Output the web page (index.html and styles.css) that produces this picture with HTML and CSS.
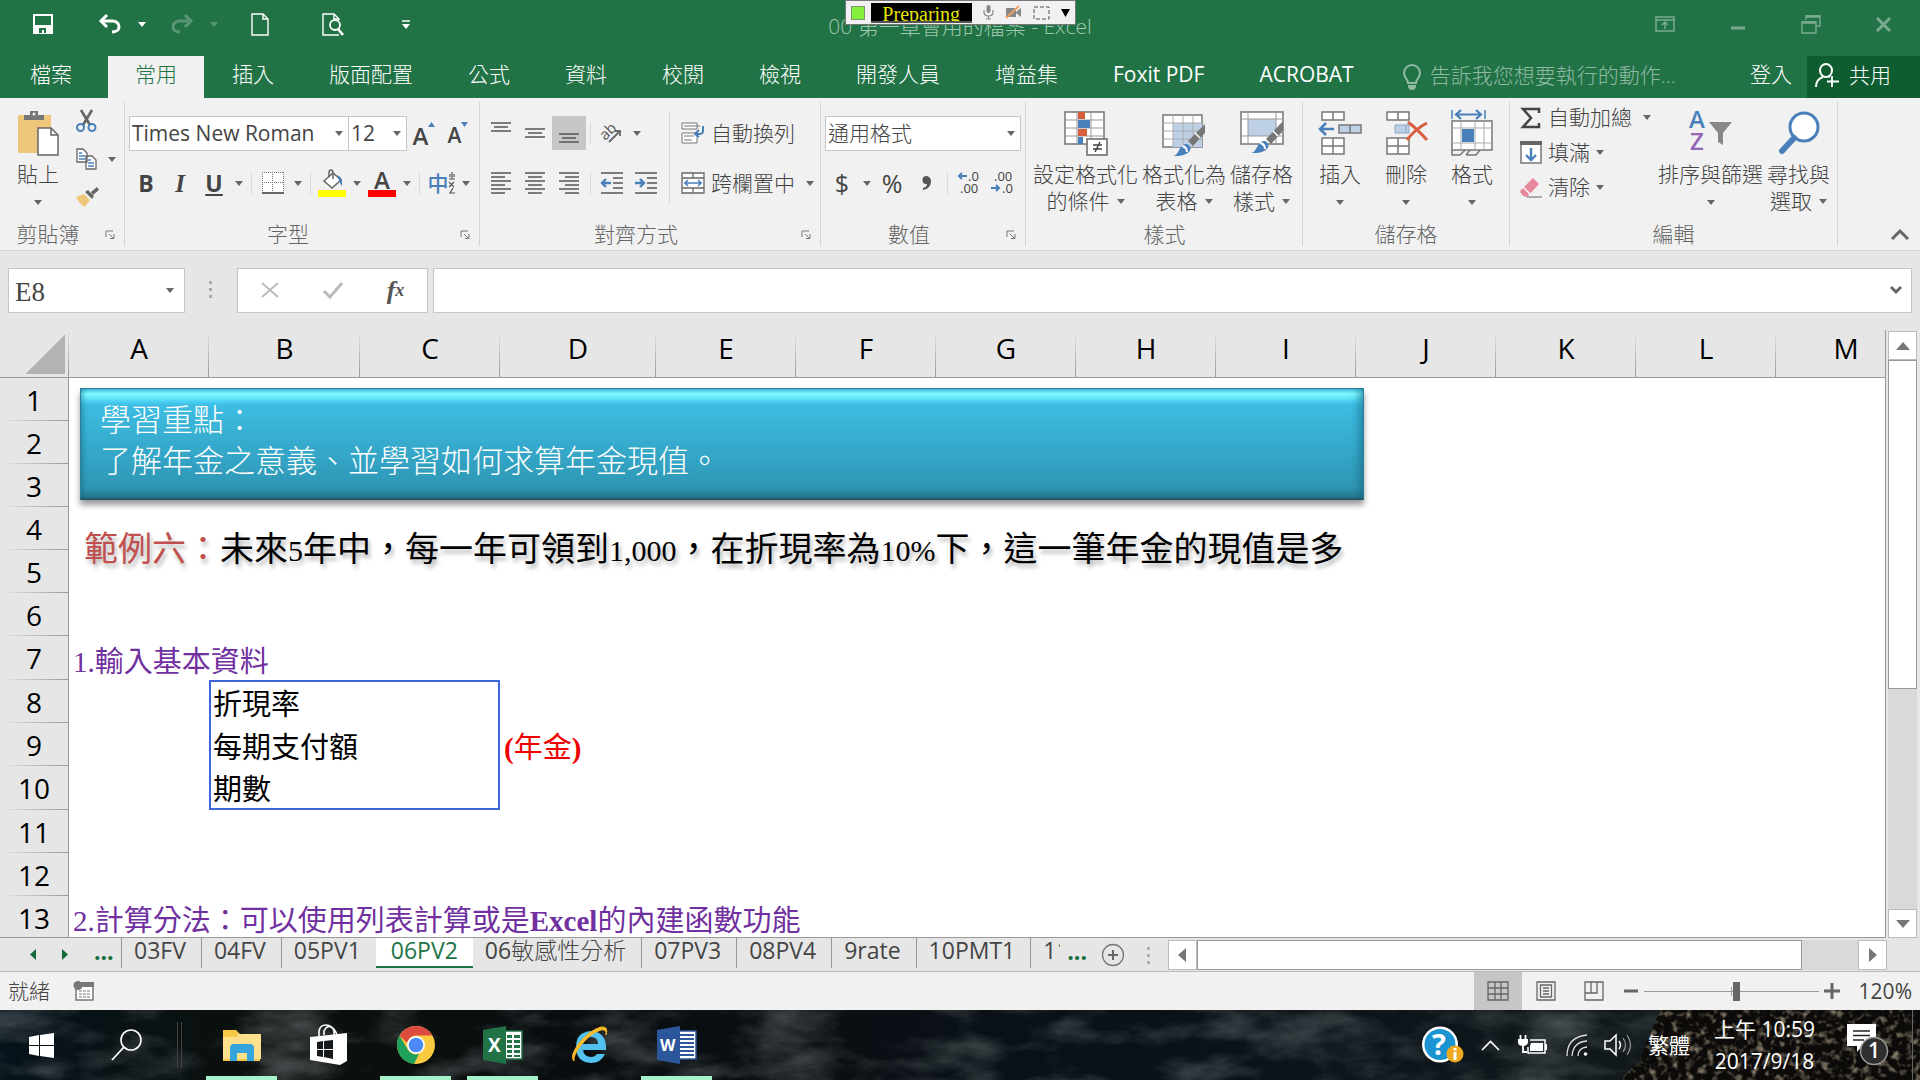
FILE: index.html
```html
<!DOCTYPE html>
<html lang="zh-Hant-TW">
<head>
  <meta charset="UTF-8" />
  <meta name="viewport" content="width=device-width, initial-scale=1.0" />
  <title>00 第一章會用的檔案 - Excel</title>
  <link rel="stylesheet" href="styles.css">
</head>
<body>
  <header class="titlebar">
    <div class="qat">
      <button class="qat-btn" aria-label="儲存檔案"><svg width="20" height="20" viewBox="0 0 20 20"><path d="M1 1h18v18H1z" fill="none" stroke="#fff" stroke-width="2"/><path d="M2 11h16v8H2z" fill="#fff"/><path d="M6 14h7v5h-2v-3H9v3H6z" fill="#217346"/></svg></button>
      <div class="qat-split">
        <button class="qat-main" aria-label="復原"><svg width="22" height="20" viewBox="0 0 22 20"><path d="M2 7h11c5 0 7 3 7 6s-3 5-7 5" fill="none" stroke="#fff" stroke-width="3"/><path d="M8 1L2 7l6 6" fill="none" stroke="#fff" stroke-width="3"/></svg></button>
        <button class="qat-arrow" aria-label="復原選項"><i class="caret"></i></button>
      </div>
      <div class="qat-split dim">
        <button class="qat-main" aria-label="重複"><svg width="22" height="20" viewBox="0 0 22 20"><path d="M20 7H9c-5 0-7 3-7 6s3 5 7 5" fill="none" stroke="#fff" stroke-width="3"/><path d="M14 1l6 6-6 6" fill="none" stroke="#fff" stroke-width="3"/></svg></button>
        <button class="qat-arrow" aria-label="重複選項"><i class="caret"></i></button>
      </div>
      <button class="qat-btn" aria-label="新增"><svg width="18" height="23" viewBox="0 0 18 23"><path d="M1 1h11l5 5v16H1zM12 1v5h5" fill="none" stroke="#fff" stroke-width="1.4"/></svg></button>
      <button class="qat-btn" aria-label="預覽列印"><svg width="22" height="23" viewBox="0 0 22 23"><path d="M17 7V6l-5-5H1v21h16M12 1v5h5" fill="none" stroke="#fff" stroke-width="1.4"/><circle cx="13" cy="12" r="5" fill="#217346" stroke="#fff" stroke-width="1.8"/><path d="M16 16l5 6" stroke="#fff" stroke-width="2.6"/></svg></button>
      <button class="qat-btn" aria-label="自訂快速存取工具列"><svg width="8" height="9" viewBox="0 0 8 9"><path d="M0 1h8" stroke="#fff" stroke-width="1.500"/><path d="M0 4h8l-4 5z" fill="#fff"/></svg></button>
    </div>
    <h1 class="doc-title">00 第一章會用的檔案 - Excel</h1>
    <div class="window-btns">
      <button aria-label="功能區顯示選項"><svg width="20" height="16" viewBox="0 0 20 16"><path d="M1 1h18v14H1zM1 4h18M10 13V6M7 9l3-3 3 3" fill="none" stroke="#fff" stroke-width="1.5"/></svg></button>
      <button aria-label="最小化"><svg width="16" height="16" viewBox="0 0 16 16"><path d="M1 12h14" stroke="#fff" stroke-width="3"/></svg></button>
      <button aria-label="還原"><svg width="20" height="20" viewBox="0 0 20 20"><path d="M5 6V2h14v10h-4M1 8h14v11H1z" fill="none" stroke="#fff" stroke-width="1.4"/><path d="M5 2.500h14M1 8.500h14" stroke="#fff" stroke-width="2.500"/></svg></button>
      <button aria-label="關閉"><svg width="15" height="15" viewBox="0 0 15 15"><path d="M1 1l13 13M14 1L1 14" stroke="#fff" stroke-width="3"/></svg></button>
    </div>
    <div class="recorder">
      <span class="rec-light"></span>
      <span class="rec-state">Preparing</span>
      <svg width="11" height="15" viewBox="0 0 11 15"><rect x="3.500" y="0" width="4" height="8" rx="2" fill="#888"/><path d="M1 5v2q0 4 4.500 4t4.500-4V5M5.500 11v3M3 14h5" fill="none" stroke="#888" stroke-width="1.200"/></svg>
      <svg width="17" height="13" viewBox="0 0 17 13"><path d="M1 2h10v9H1zM11 6l5-4v9l-5-4z" fill="#888"/><path d="M1 12L14 0" stroke="#f0a060" stroke-width="2"/></svg>
      <svg width="17" height="14" viewBox="0 0 17 14"><path d="M1 1h15v12H1z" fill="none" stroke="#555" stroke-dasharray="4 2"/></svg>
      <svg width="9" height="8" viewBox="0 0 9 8"><path d="M0 0h9L4.500 8z"/></svg>
    </div>
  </header>

  <nav class="tabs">
    <a class="tab file" href="#file">檔案</a>
    <a class="tab active" href="#home">常用</a>
    <a class="tab" href="#insert">插入</a>
    <a class="tab" href="#layout">版面配置</a>
    <a class="tab" href="#formulas">公式</a>
    <a class="tab" href="#data">資料</a>
    <a class="tab" href="#review">校閱</a>
    <a class="tab" href="#view">檢視</a>
    <a class="tab" href="#developer">開發人員</a>
    <a class="tab" href="#addins">增益集</a>
    <a class="tab latin" href="#foxit">Foxit PDF</a>
    <a class="tab latin" href="#acrobat">ACROBAT</a>
    <label class="tell-me">
      <svg width="18" height="26" viewBox="0 0 18 26"><path d="M5 19c0-4-4-5-4-10a8 8 0 0 1 16 0c0 5-4 6-4 10z" fill="none" stroke="#90b9a2" stroke-width="2"/><path d="M5 21h8v2q-1 3-4 3t-4-3z" fill="#90b9a2"/></svg>
      <input type="text" placeholder="告訴我您想要執行的動作..." aria-label="告訴我您想要執行的動作">
    </label>
    <a class="sign-in" href="#signin">登入</a>
    <button class="share"><svg width="24" height="25" viewBox="0 0 24 25"><path d="M1 24c0-7 4-9 7-10 M15 14l-2-1" fill="none" stroke="#fff" stroke-width="2"/><ellipse cx="11" cy="7.500" rx="6" ry="6.500" fill="none" stroke="#fff" stroke-width="2"/><path d="M17 13v11M12 18.500h12" stroke="#fff" stroke-width="1.800"/></svg>共用</button>
  </nav>

  <section class="ribbon">
    <div class="group clipboard">
      <div class="group-body">
        <button class="big"><svg width="42" height="46" viewBox="0 0 42 46"><path d="M1 5h33v38H1z" fill="#eec67c"/><path d="M7 10V5h6V1h8v4h6v5z" fill="#777"/><circle cx="17" cy="4" r="1.500" fill="#f1f1f1"/><path d="M21 18h13l7 7v20H21z" fill="#fff" stroke="#666" stroke-width="1.500"/><path d="M34 18v7h7" fill="none" stroke="#666" stroke-width="1.500"/></svg><span>貼上</span><i class="caret"></i></button>
        <div class="mini-col">
          <button class="mini" aria-label="剪下"><svg width="21" height="22" viewBox="0 0 21 22"><path d="M5 0l9 15M16 0L7 15" stroke="#666" stroke-width="2.600"/><circle cx="4.500" cy="17.500" r="3.500" fill="none" stroke="#4a80ba" stroke-width="2"/><circle cx="16" cy="17.500" r="3.500" fill="none" stroke="#4a80ba" stroke-width="2"/></svg></button>
          <button class="mini" aria-label="複製"><svg width="21" height="22" viewBox="0 0 21 22"><path d="M1 1h6l4 4v9H1zM10 8h6l4 4v9H10z" fill="#fff" stroke="#666" stroke-width="1.300"/><path d="M3 5h3M3 8h6M3 11h6M12 12h3M12 15h6M12 18h6" stroke="#4a80ba" stroke-width="1.300"/></svg><i class="caret"></i></button>
          <button class="mini" aria-label="複製格式"><svg width="24" height="20" viewBox="0 0 24 20"><path d="M0 10l8-3 6 6-5 7q-6-3-9-10z" fill="#eec67c"/><path d="M9 5l3-2 6 6-2 3z" fill="#666"/><path d="M15 5l6-5 2 3-6 5z" fill="#666"/></svg></button>
        </div>
      </div>
      <div class="group-foot"><span>剪貼簿</span><button class="launcher" aria-label="剪貼簿設定"><svg width="10" height="9" viewBox="0 0 10 9"><path d="M1 7V1h7M4 4l4 4M9 4v4.500H5" fill="none" stroke="#777"/></svg></button></div>
    </div>

    <div class="group">
      <div class="group-body rows">
        <div class="row">
          <span class="combo font-name latin"><select aria-label="字型"><option>Times New Roman</option></select></span>
          <span class="combo font-size latin"><select aria-label="字型大小"><option>12</option></select></span>
          <button class="tool up" aria-label="放大字型"><b class="big-a">A</b><svg width="7" height="5" viewBox="0 0 7 5"><path d="M0 5l3.500-5L7 5z" fill="#4a80ba"/></svg></button>
          <button class="tool up" aria-label="縮小字型"><b class="small-a">A</b><svg width="7" height="5" viewBox="0 0 7 5"><path d="M0 0l3.500 5L7 0z" fill="#4a80ba"/></svg></button>
        </div>
        <div class="row">
          <button class="tool letter"><b>B</b></button>
          <button class="tool letter"><b class="serif-i">I</b></button>
          <button class="tool letter"><b><u>U</u></b></button>
          <button class="drop" aria-label="底線選項"><i class="caret"></i></button>
          <span class="sep"></span>
          <button class="tool" aria-label="框線"><svg width="22" height="22" viewBox="0 0 22 22"><path d="M1 1h20v20H1z" fill="#fff"/><path d="M.5 0v20M21.500 0v20M0 .5h22M10.500 0v20M0 10.500h22" stroke="#777" stroke-dasharray="1 1"/><path d="M0 21h22" stroke="#666" stroke-width="2"/></svg></button>
          <button class="drop" aria-label="框線選項"><i class="caret"></i></button>
          <span class="sep"></span>
          <button class="tool" aria-label="填滿色彩"><svg width="28" height="28" viewBox="0 0 28 28"><path d="M0 21h28v7H0z" fill="#ff0"/><path d="M6 12l9-8 8 7-9 8z" fill="#fff" stroke="#666" stroke-width="1.500"/><path d="M11 8V4q0-3 2-3t2 3v6" fill="none" stroke="#666" stroke-width="1.500"/><path d="M19 6q5 2 5 6v5q-3-4-3-6z" fill="#4a80ba"/></svg></button>
          <button class="drop" aria-label="填滿選項"><i class="caret"></i></button>
          <button class="tool font-color" aria-label="字型色彩">A</button>
          <button class="drop" aria-label="字型色彩選項"><i class="caret"></i></button>
          <span class="sep"></span>
          <button class="tool phonetic" aria-label="注音標示">中<svg width="6" height="22" viewBox="0 0 6 22"><path d="M0 7h6M3 0v7M1 2v3M5 2v3M0 10l5 5M5 10l-5 5M4 16l-3 5h5" fill="none" stroke="#555" stroke-width="1.200"/></svg></button>
          <button class="drop" aria-label="注音選項"><i class="caret"></i></button>
        </div>
      </div>
      <div class="group-foot"><span>字型</span><button class="launcher" aria-label="字型設定"><svg width="10" height="9" viewBox="0 0 10 9"><path d="M1 7V1h7M4 4l4 4M9 4v4.500H5" fill="none" stroke="#777"/></svg></button></div>
    </div>

    <div class="group">
      <div class="group-body">
        <div class="rows align-col">
          <div class="row">
            <button class="tool" aria-label="靠上對齊"><svg width="20" height="22" viewBox="0 0 20 22"><path d="M0 1h20M3 5h14M0 9h20" stroke="#555" stroke-width="1.300"/></svg></button>
            <button class="tool" aria-label="置中對齊"><svg width="20" height="22" viewBox="0 0 20 22"><path d="M0 7h20M3 11h14M0 15h20" stroke="#555" stroke-width="1.300"/></svg></button>
            <button class="tool on" aria-label="靠下對齊"><svg width="20" height="22" viewBox="0 0 20 22"><path d="M0 12h20M3 16h14M0 20h20" stroke="#555" stroke-width="1.300"/></svg></button>
            <span class="sep"></span>
            <button class="tool" aria-label="方向"><svg width="24" height="22" viewBox="0 0 24 22"><text x="1" y="15" font-size="15" font-weight="400" transform="rotate(-45 8 12)" fill="#555">ab</text><path d="M9 20L20 9M20 14V9h-5" fill="none" stroke="#666" stroke-width="1.800"/></svg></button>
            <button class="drop" aria-label="方向選項"><i class="caret"></i></button>
          </div>
          <div class="row">
            <button class="tool" aria-label="靠左對齊"><svg width="20" height="22" viewBox="0 0 20 22"><path d="M0 1h20M0 5h14M0 9h20M0 13h14M0 17h20M0 21h14" stroke="#555" stroke-width="1.300"/></svg></button>
            <button class="tool" aria-label="置中"><svg width="20" height="22" viewBox="0 0 20 22"><path d="M0 1h20M3 5h14M0 9h20M3 13h14M0 17h20M3 21h14" stroke="#555" stroke-width="1.300"/></svg></button>
            <button class="tool" aria-label="靠右對齊"><svg width="20" height="22" viewBox="0 0 20 22"><path d="M0 1h20M6 5h14M0 9h20M6 13h14M0 17h20M6 21h14" stroke="#555" stroke-width="1.300"/></svg></button>
            <span class="sep"></span>
            <button class="tool" aria-label="減少縮排"><svg width="22" height="22" viewBox="0 0 22 22"><path d="M0 1h22M12 6h10M12 11h10M12 16h10M0 21h22" stroke="#555" stroke-width="1.300"/><path d="M10 11H1M5 7l-4 4 4 4" fill="none" stroke="#4a80ba" stroke-width="2.400"/></svg></button>
            <button class="tool" aria-label="增加縮排"><svg width="22" height="22" viewBox="0 0 22 22"><path d="M0 1h22M12 6h10M12 11h10M12 16h10M0 21h22" stroke="#555" stroke-width="1.300"/><path d="M0 11h9M5 7l4 4-4 4" fill="none" stroke="#4a80ba" stroke-width="2.400"/></svg></button>
          </div>
        </div>
        <span class="sep tall"></span>
        <div class="rows">
          <button class="wide"><svg width="24" height="22" viewBox="0 0 24 22"><path d="M1 1h15v6H1zM1 11h15v10H1z" fill="#fff" stroke="#777"/><path d="M3 4h16M3 14h10M3 18h8" stroke="#777"/><path d="M22 4v5q0 3-4 3h-3M18 8l-4 4 4 3" fill="none" stroke="#4a80ba" stroke-width="2"/></svg>自動換列</button>
          <button class="wide"><svg width="24" height="22" viewBox="0 0 24 22"><path d="M1 1h22v20H1zM1 6h22M1 16h22M12 1v5M12 16v5" fill="#fff" stroke="#666" stroke-width="1.300"/><path d="M3 11h18M7 8l-3 3 3 3M17 8l3 3-3 3" fill="none" stroke="#4a80ba" stroke-width="1.500"/></svg>跨欄置中<i class="caret"></i></button>
        </div>
      </div>
      <div class="group-foot"><span>對齊方式</span><button class="launcher" aria-label="對齊設定"><svg width="10" height="9" viewBox="0 0 10 9"><path d="M1 7V1h7M4 4l4 4M9 4v4.500H5" fill="none" stroke="#777"/></svg></button></div>
    </div>

    <div class="group">
      <div class="group-body rows">
        <div class="row"><span class="combo number-format"><select aria-label="數值格式"><option>通用格式</option></select></span></div>
        <div class="row">
          <button class="tool sign">$</button>
          <button class="drop" aria-label="會計格式"><i class="caret"></i></button>
          <button class="tool sign">%</button>
          <button class="tool" aria-label="千分位樣式"><svg width="12" height="16" viewBox="0 0 12 16"><path d="M6 1a5 5 0 0 1 5 5c0 5-3 8-8 9v-2c3-1 4-2 4-4a4 4 0 1 1-1-8z" fill="#555"/></svg></button>
          <span class="sep"></span>
          <button class="tool decimals" aria-label="增加小數位數"><svg width="24" height="24" viewBox="0 0 24 24"><text x="11" y="10">.0</text><text x="3" y="22">.00</text><path d="M10 5H2M5 2L2 5l3 3" fill="none" stroke="#4a80ba" stroke-width="2"/></svg></button>
          <button class="tool decimals" aria-label="減少小數位數"><svg width="24" height="24" viewBox="0 0 24 24"><text x="3" y="10">.00</text><text x="11" y="22">.0</text><path d="M0 17h8M5 14l3 3-3 3" fill="none" stroke="#4a80ba" stroke-width="2"/></svg></button>
        </div>
      </div>
      <div class="group-foot"><span>數值</span><button class="launcher" aria-label="數值設定"><svg width="10" height="9" viewBox="0 0 10 9"><path d="M1 7V1h7M4 4l4 4M9 4v4.500H5" fill="none" stroke="#777"/></svg></button></div>
    </div>

    <div class="group styles">
      <div class="group-body">
        <button class="big"><svg width="44" height="46" viewBox="0 0 44 46"><path d="M1 2h39v32H1z" fill="#fff" stroke="#777" stroke-width="1.500"/><path d="M1 10h39M1 18h39M1 26h39M13 2v32M27 2v32" stroke="#999"/><path d="M14 2h7v7h-7zM14 19h9v7h-9z" fill="#d6603d"/><path d="M14 10h12v8H14zM14 27h5v7h-5z" fill="#4a80ba"/><path d="M23 29h20v16H23z" fill="#fff" stroke="#666" stroke-width="1.500"/><path d="M29 35h9M29 39h9M36 32l-5 10" stroke="#444" stroke-width="1.500"/></svg><span>設定格式化</span><span>的條件<i class="caret"></i></span></button>
        <button class="big"><svg width="44" height="46" viewBox="0 0 44 46"><path d="M1 5h39v32H1z" fill="#fff" stroke="#777" stroke-width="1.500"/><path d="M11 13h29v24H11z" fill="#bdd0e6"/><path d="M1 13h39M1 21h39M1 29h39M11 5v32M21 5v32M31 5v32" stroke="#aaa"/><path d="M43 14v9L31 36l-5-5z" fill="#777"/><path d="M33 23l5 5" stroke="#fff" stroke-width="1.500"/><path d="M11 46c7-1 5-12 14-12 8 4 2 13-14 12z" fill="#4a80ba"/><path d="M20 36q5 1 5 6" fill="none" stroke="#fff" stroke-width="2"/></svg><span>格式化為</span><span>表格<i class="caret"></i></span></button>
        <button class="big"><svg width="44" height="46" viewBox="0 0 44 46"><path d="M1 2h42v32H1z" fill="#fff" stroke="#777" stroke-width="1.500"/><path d="M8 9h28v17H8z" fill="#bdd0e6"/><path d="M1 9h42M1 26h42M8 2v32M36 2v32" stroke="#999"/><path d="M43 11v10L31 34l-5-5z" fill="#777"/><path d="M33 21l5 5" stroke="#fff" stroke-width="1.500"/><path d="M11 43c7-1 5-12 14-12 8 4 2 13-14 12z" fill="#4a80ba"/><path d="M20 33q5 1 5 6" fill="none" stroke="#fff" stroke-width="2"/></svg><span>儲存格</span><span>樣式<i class="caret"></i></span></button>
      </div>
      <div class="group-foot"><span>樣式</span></div>
    </div>

    <div class="group cells">
      <div class="group-body">
        <button class="big"><svg width="44" height="46" viewBox="0 0 44 46"><path d="M4 2h22v8H4zM15 2v8M4 28h22v16H4zM15 28v16M4 36h22" fill="#fff" stroke="#777" stroke-width="1.500"/><path d="M21 15h22v8H21zM32 15v8" fill="#bdd0e6" stroke="#777" stroke-width="1.500"/><path d="M16 19H3M8 13l-6 6 6 6" fill="none" stroke="#4a80ba" stroke-width="2.500"/></svg><span>插入</span><i class="caret"></i></button>
        <button class="big"><svg width="44" height="46" viewBox="0 0 44 46"><path d="M3 2h22v8H3zM14 2v8M3 28h22v16H3zM14 28v16M3 36h22" fill="#fff" stroke="#777" stroke-width="1.500"/><path d="M11 15h14v8H11zM22 15v8" fill="#bdd0e6" stroke="#8aa4c4"/><path d="M24 12q9 7 19 18M43 13q-12 6-20 17" fill="none" stroke="#d6603d" stroke-width="3"/></svg><span>刪除</span><i class="caret"></i></button>
        <button class="big"><svg width="44" height="46" viewBox="0 0 44 46"><path d="M2 0v9M35 0v9" stroke="#4a80ba" stroke-width="1.500"/><path d="M6 4.500h25M11 0L6 4.500 11 9M26 0l5 4.500L26 9" fill="none" stroke="#4a80ba" stroke-width="2.200"/><path d="M2 11h40v29H2z" fill="#fff" stroke="#777" stroke-width="1.500"/><path d="M2 18h40M2 33h40M11 11v29M25 11v29M34 11v29" stroke="#aaa"/><path d="M12 19h12v13H12z" fill="#4a80ba"/><path d="M2 40v5h8l5-5M16 45l4-5M16 45h10l4-5" fill="none" stroke="#777" stroke-width="1.500"/></svg><span>格式</span><i class="caret"></i></button>
      </div>
      <div class="group-foot"><span>儲存格</span></div>
    </div>

    <div class="group editing">
      <div class="group-body">
        <div class="edit-col">
          <button class="wide"><svg width="22" height="20" viewBox="0 0 22 20"><path d="M19 5V1H3l8 9-8 9h16v-4" fill="none" stroke="#444" stroke-width="2.500"/></svg>自動加總<i class="caret far"></i></button>
          <button class="wide"><svg width="22" height="23" viewBox="0 0 22 23"><path d="M1 1h20v21H1z" fill="#fff" stroke="#777" stroke-width="1.500"/><path d="M0 0h22v4H0z" fill="#666"/><path d="M11 7v12M6 14l5 5 5-5" fill="none" stroke="#4a80ba" stroke-width="2.400"/></svg>填滿<i class="caret"></i></button>
          <button class="wide"><svg width="22" height="20" viewBox="0 0 22 20"><path d="M0 13L13 0l6 6L7 19q-5 0-7-6z" fill="#e8889a"/><path d="M3 9l8 8" stroke="#fff" stroke-width="1.500"/><path d="M7 19h15" stroke="#666"/></svg>清除<i class="caret"></i></button>
        </div>
        <button class="big"><svg width="44" height="46" viewBox="0 0 44 46"><text x="0" y="18" font-size="24" font-weight="600" fill="#4a80ba">A</text><text x="1" y="40" font-size="24" font-weight="600" fill="#9265b5">Z</text><path d="M20 12h23L34 23v12l-5-3v-9z" fill="#888"/></svg><span>排序與篩選</span><i class="caret"></i></button>
        <button class="big"><svg width="44" height="46" viewBox="0 0 44 46"><ellipse cx="27" cy="17" rx="14" ry="14" fill="#fff" stroke="#4a80ba" stroke-width="3"/><path d="M17 28L5 41" stroke="#4a80ba" stroke-width="6" stroke-linecap="round"/></svg><span>尋找與</span><span>選取<i class="caret"></i></span></button>
      </div>
      <div class="group-foot"><span>編輯</span></div>
    </div>
    <button class="collapse" aria-label="摺疊功能區"><svg width="18" height="11" viewBox="0 0 18 11"><path d="M1 10l8-8 8 8" fill="none" stroke="#666" stroke-width="3"/></svg></button>
  </section>

  <section class="formula-bar">
    <label class="combo name-box"><input type="text" value="E8" aria-label="名稱方塊"></label>
    <span class="grip"></span>
    <div class="fx-box">
      <button aria-label="取消"><svg width="18" height="16" viewBox="0 0 18 16"><path d="M1 1l16 14M17 1L1 15" stroke="#bbb" stroke-width="2"/></svg></button>
      <button aria-label="輸入"><svg width="20" height="17" viewBox="0 0 20 17"><path d="M1 9l6 6L19 1" fill="none" stroke="#bbb" stroke-width="3"/></svg></button>
      <button class="fx">f<small>x</small></button>
    </div>
    <div class="formula-input">
      <input type="text" aria-label="資料編輯列">
      <button aria-label="展開資料編輯列"><svg width="12" height="9" viewBox="0 0 12 9"><path d="M1 1l5 5 5-5" fill="none" stroke="#666" stroke-width="3"/></svg></button>
    </div>
  </section>

  <main class="sheet">
    <div class="grid-view">
      <table class="cells-table">
        <colgroup>
          <col class="c-head"><col><col class="c-b"><col><col class="c-d"><col><col><col><col><col><col><col><col><col>
        </colgroup>
        <thead>
          <tr><th class="corner"></th><th>A</th><th>B</th><th>C</th><th>D</th><th>E</th><th>F</th><th>G</th><th>H</th><th>I</th><th>J</th><th>K</th><th>L</th><th>M</th></tr>
        </thead>
        <tbody>
          <tr><th>1</th><td colspan="13"></td></tr>
          <tr><th>2</th><td colspan="13"></td></tr>
          <tr><th>3</th><td colspan="13"></td></tr>
          <tr><th>4</th><td colspan="13"></td></tr>
          <tr><th>5</th><td colspan="13"></td></tr>
          <tr><th>6</th><td colspan="13"></td></tr>
          <tr class="tall-row"><th>7</th><td class="purple">1.輸入基本資料</td><td colspan="12"></td></tr>
          <tr><th>8</th><td></td><td class="box-tl">折現率</td><td class="box-tr"></td><td colspan="10"></td></tr>
          <tr><th>9</th><td></td><td class="box-l">每期支付額</td><td class="box-r"></td><td class="red"><b>(</b>年金<b>)</b></td><td colspan="9"></td></tr>
          <tr class="tall-row"><th>10</th><td></td><td class="box-bl">期數</td><td class="box-br"></td><td colspan="10"></td></tr>
          <tr><th>11</th><td colspan="13"></td></tr>
          <tr><th>12</th><td colspan="13"></td></tr>
          <tr><th>13</th><td class="purple">2.計算分法：可以使用列表計算或是<b>Excel</b>的內建函數功能</td><td colspan="12"></td></tr>
        </tbody>
      </table>
      <div class="banner">學習重點：<br>了解年金之意義、並學習如何求算年金現值。</div>
      <p class="example"><span class="example-no">範例六：</span>未來<span class="num">5</span>年中，每一年可領到<span class="num">1,000</span>，在折現率為<span class="num">10%</span>下，這一筆年金的現值是多</p>
    </div>
    <div class="vscroll">
      <button aria-label="向上"><svg width="14" height="8" viewBox="0 0 14 8"><path d="M0 8l7-8 7 8z" fill="#777"/></svg></button>
      <div class="v-thumb"></div>
      <div class="v-gutter"></div>
      <button aria-label="向下"><svg width="14" height="8" viewBox="0 0 14 8"><path d="M0 0l7 8 7-8z" fill="#777"/></svg></button>
    </div>
  </main>

  <div class="sheet-bar">
    <div class="sheet-nav">
      <button aria-label="上一張"><svg width="6" height="11" viewBox="0 0 6 11"><path d="M6 0v11L0 5.500z" fill="#176b3a"/></svg></button>
      <button aria-label="下一張"><svg width="6" height="11" viewBox="0 0 6 11"><path d="M0 0v11l6-5.500z" fill="#176b3a"/></svg></button>
      <button class="more">...</button>
    </div>
    <a class="sheet-tab" href="#03FV">03FV</a>
    <a class="sheet-tab" href="#04FV">04FV</a>
    <a class="sheet-tab" href="#05PV1">05PV1</a>
    <a class="sheet-tab current" href="#06PV2">06PV2</a>
    <a class="sheet-tab" href="#06">06<span class="cjk">敏感性分析</span></a>
    <a class="sheet-tab" href="#07PV3">07PV3</a>
    <a class="sheet-tab" href="#08PV4">08PV4</a>
    <a class="sheet-tab" href="#9rate">9rate</a>
    <a class="sheet-tab" href="#10PMT1">10PMT1</a>
    <a class="sheet-tab cut" href="#11">11</a>
    <button class="more">...</button>
    <button class="add-sheet" aria-label="新工作表"><svg width="24" height="24" viewBox="0 0 24 24"><circle cx="12" cy="12" r="10.500" fill="none" stroke="#777" stroke-width="1.300"/><path d="M12 7v10M7 12h10" stroke="#666" stroke-width="2"/></svg></button>
    <span class="grip"></span>
    <div class="hscroll">
      <button aria-label="向左"><svg width="8" height="14" viewBox="0 0 8 14"><path d="M8 0v14L0 7z" fill="#777"/></svg></button>
      <div class="h-thumb"></div>
      <div class="h-gutter"></div>
      <button aria-label="向右"><svg width="8" height="14" viewBox="0 0 8 14"><path d="M0 0v14l8-7z" fill="#777"/></svg></button>
    </div>
  </div>

  <div class="status-bar">
    <span class="ready">就緒</span>
    <svg width="21" height="20" viewBox="0 0 21 20"><path d="M3 3h17v16H3z" fill="#fff" stroke="#777" stroke-width="1.500"/><path d="M8 1h13v5H8z" fill="#777"/><circle cx="5" cy="4.500" r="4.500" fill="#777"/><path d="M6 10h12M6 13h12M6 16h12" stroke="#777" stroke-dasharray="3 1"/></svg>
    <div class="views">
      <button class="on" aria-label="標準"><svg width="22" height="20" viewBox="0 0 22 20"><path d="M1 1h20v18H1zM8 1v18M14 1v18M1 7h20M1 13h20" fill="none" stroke="#666" stroke-width="1.300"/></svg></button>
      <button aria-label="整頁模式"><svg width="20" height="20" viewBox="0 0 20 20"><path d="M1 1h18v18H1zM4.500 4h11v12h-11zM7 7h6M7 10h6M7 13h6" fill="none" stroke="#666" stroke-width="1.300"/></svg></button>
      <button aria-label="分頁預覽"><svg width="20" height="20" viewBox="0 0 20 20"><path d="M1 1h18v18H1zM7 1v11M1 12h12V1" fill="none" stroke="#666" stroke-width="1.300"/></svg></button>
    </div>
    <button class="zoom-btn" aria-label="縮小"><svg width="14" height="14" viewBox="0 0 14 14"><path d="M0 7h14" stroke="#666" stroke-width="3"/></svg></button>
    <input class="zoom" type="range" min="0" max="100" value="53" aria-label="縮放">
    <button class="zoom-btn" aria-label="放大"><svg width="16" height="16" viewBox="0 0 16 16"><path d="M0 8h16M8 0v16" stroke="#666" stroke-width="3"/></svg></button>
    <span class="percent latin">120%</span>
  </div>

  <footer class="taskbar">
    <svg class="wallpaper" preserveAspectRatio="none" viewBox="0 0 1920 70">
      <filter id="waves" x="0" y="0" width="100%" height="100%"><feTurbulence type="fractalNoise" baseFrequency="0.012 0.03" numOctaves="5" seed="4"/><feColorMatrix values="0 0 0 0 0.12  0 0 0 0 0.14  0 0 0 0 0.15  1.500 0 0 0 -0.650"/></filter>
      <filter id="stones" x="0" y="0" width="100%" height="100%"><feTurbulence type="fractalNoise" baseFrequency="0.14" numOctaves="2" seed="8"/><feColorMatrix values="0 0 0 0 0.22  0 0 0 0 0.18  0 0 0 0 0.13  3 0 0 0 -1.450"/></filter>
      <clipPath id="shore"><path d="M1660 0h260v70h-300l20-20z"/></clipPath>
      <path d="M0 0h1920v70H0z" filter="url(#waves)"/>
      <g clip-path="url(#shore)"><path d="M1620 0h300v70h-300z" fill="#0c0b09"/><path d="M1600 0h320v70h-320z" filter="url(#stones)"/></g>
    </svg>
    <button class="task start" aria-label="開始"><svg width="25" height="25" viewBox="0 0 25 25"><path d="M0 4l10-2v10H0zM11 2l14-2v12H11zM0 13h10v10L0 21zM11 13h14v12l-14-2z" fill="#fff"/></svg></button>
    <button class="task" aria-label="搜尋"><svg width="32" height="32" viewBox="0 0 32 32"><circle cx="20" cy="11" r="10" fill="none" stroke="#fff" stroke-width="1.600"/><path d="M13 18L1 31" stroke="#fff" stroke-width="1.800"/></svg></button>
    <span class="task-grip"></span>
    <button class="task open" aria-label="檔案總管"><svg width="38" height="34" viewBox="0 0 38 34"><path d="M0 2h13l4 4h20v27H0z" fill="#f5c945"/><path d="M0 9h13l3-3h22v25H0z" fill="#fde08c"/><path d="M7 33V20q0-4 4-4h16q4 0 4 4v13h-7v-8H14v8z" fill="#35a3dc"/></svg></button>
    <button class="task" aria-label="市集"><svg width="38" height="42" viewBox="0 0 38 42"><path d="M9 12V7q1-6 7-6t8 6v4M14 11V7q3-6 7-4t6 8" fill="none" stroke="#fff" stroke-width="1.600"/><path d="M0 13l37-4v28l-7 4-30-5z" fill="#fff"/><path d="M7 18l6-1v8H7zM14 17l9-1v9h-9zM7 26h6v7l-6-1zM14 26h9v9l-9-2z" fill="#15191b"/></svg></button>
    <button class="task open" aria-label="Chrome"><svg width="40" height="40" viewBox="0 0 40 40"><circle cx="20" cy="20" r="19" fill="#fcca3f"/><path d="M3.500 10.500A19 19 0 0 1 36.500 10.500H20A9.500 9.500 0 0 0 11 18z" fill="#dc4b3e"/><path d="M3.500 10.500L12 25a9.500 9.500 0 0 0 11 4l-5 10A19 19 0 0 1 3.500 10.500z" fill="#1fa15d"/><circle cx="20" cy="20" r="9" fill="#fff"/><circle cx="20" cy="20" r="7.300" fill="#4c8bf5"/></svg></button>
    <button class="task open" aria-label="Excel"><svg width="40" height="38" viewBox="0 0 40 38"><path d="M20 5h19v28H20z" fill="#fff" stroke="#217346" stroke-width="1.500"/><path d="M24 9h5v3h-5zM31 9h6v3h-6zM24 14h5v3h-5zM31 14h6v3h-6zM24 19h5v3h-5zM31 19h6v3h-6zM24 24h5v3h-5zM31 24h6v3h-6zM24 29h5v2h-5zM31 29h6v2h-6z" fill="#217346"/><path d="M0 4l23-4v38L0 34z" fill="#217346"/><text x="5" y="26" font-size="19" font-weight="700" fill="#fff">X</text></svg></button>
    <button class="task" aria-label="Internet Explorer"><svg width="40" height="38" viewBox="0 0 40 38"><path d="M36 24H13q1 7 8 7 4 0 6-3h8q-4 9-14 9Q6 36 6 21T21 5q16 1 15 19zM13 18h15q0-7-7-7t-8 7z" fill="#52c1ef"/><path d="M4 35q-5-4 5-18Q20 4 31 1q8-1 5 8 1-6-5-5Q21 7 12 18 3 29 4 35z" fill="#fbc02d" stroke="#f0b020"/></svg></button>
    <button class="task open" aria-label="Word"><svg width="40" height="38" viewBox="0 0 40 38"><path d="M20 5h19v28H20z" fill="#fff" stroke="#2b579a" stroke-width="1.500"/><path d="M23 9h14M23 13h14M23 17h14M23 21h14M23 25h14M23 29h14" stroke="#2b579a" stroke-width="2"/><path d="M0 4l23-4v38L0 34z" fill="#2b579a"/><text x="3" y="25" font-size="16" font-weight="700" fill="#fff">W</text></svg></button>
    <div class="tray">
      <svg width="42" height="38" viewBox="0 0 42 38"><circle cx="18" cy="18.500" r="18" fill="#fff"/><circle cx="18" cy="18.500" r="15.500" fill="#1b94d2"/><text x="10" y="29" font-size="29" font-weight="700" fill="#fff">?</text><circle cx="33" cy="28" r="8.500" fill="#efa920"/><path d="M33 26v8M33 22v2.500" stroke="#fff" stroke-width="3"/></svg>
      <svg class="tray-up" width="19" height="11" viewBox="0 0 19 11"><path d="M1 10l8.500-8.500L18 10" fill="none" stroke="#fff" stroke-width="1.600"/></svg>
      <svg class="battery" width="30" height="20" viewBox="0 0 30 20"><path d="M2.500 0v5M7.500 0v5M5 9v8h4" fill="none" stroke="#fff" stroke-width="1.800"/><path d="M0 4h10v4q-1 3-5 3T0 8z" fill="#fff"/><path d="M12 5h15v13H10V12" fill="none" stroke="#fff" stroke-width="1.500"/><path d="M13 8h12v8H12V11zM27 9h2v6h-2z" fill="#fff"/></svg>
      <svg class="wifi" width="22" height="22" viewBox="0 0 22 22"><path d="M1 22Q1 3 21 1M6 22Q7 8 21 7M12 22q0-8 9-9" fill="none" stroke="#ddd" stroke-width="1.300"/><circle cx="19.500" cy="20" r="1.800" fill="#fff"/></svg>
      <svg class="sound" width="28" height="22" viewBox="0 0 28 22"><path d="M1 7h5l6-6v20l-6-6H1z" fill="none" stroke="#fff" stroke-width="1.500"/><path d="M15 7q3 4 0 8" fill="none" stroke="#fff" stroke-width="1.400"/><path d="M19 4q5 7 0 14M23 1q7 10 0 20" fill="none" stroke="#999" stroke-width="1.200"/></svg>
      <span class="ime">繁體</span>
      <time class="clock">上午 10:59<br>2017/9/18</time>
      <button class="notice" aria-label="通知"><svg width="42" height="42" viewBox="0 0 42 42"><path d="M0 0h29v22H15l-5 6v-6H0z" fill="#fff"/><path d="M6 7h17M6 11.500h17M6 16h11" stroke="#222" stroke-width="1.500"/><circle cx="27" cy="27" r="13.500" fill="#2f2f2f" stroke="#999" stroke-width="1.500"/><text x="21" y="34" font-size="21" font-weight="600" fill="#fff">1</text></svg></button>
    </div>
  </footer>
</body>
</html>
```

FILE: styles.css
```css
* {
  box-sizing: border-box;
}
body {
  margin: 0;
  height: 100vh;
  display: flex;
  flex-direction: column;
  overflow: hidden;
  background: #e6e6e6;
  color: #444;
  font-family: "Open Sans", "Noto Sans CJK TC", sans-serif;
  font-size: 21px;
  font-weight: 300;
  line-height: 27px;
}
button, input, select {
  font: inherit;
  color: inherit;
  background: none;
  border: 0;
  padding: 0;
  margin: 0;
}
button {
  display: flex;
  align-items: center;
  justify-content: center;
}
a {
  color: inherit;
  text-decoration: none;
}
svg {
  flex: none;
  display: block;
  overflow: visible;
}
.latin {
  font-weight: 400;
}
.caret {
  flex: none;
  width: 0;
  height: 0;
  border: 4px solid transparent;
  border-top: 5px solid #666;
  border-bottom: 0;
}

/* title bar */
.titlebar {
  position: relative;
  display: grid;
  grid-template-columns: 1fr auto 1fr;
  height: 56px;
  background: #217346;
  color: #fff;
}
.qat {
  display: flex;
  gap: 8px;
  height: 48px;
  padding-left: 10px;
}
.qat-btn {
  width: 65px;
}
.qat-split {
  display: flex;
}
.qat-main {
  width: 54px;
}
.qat-arrow {
  width: 10px;
}
.qat .caret {
  border-top-color: #fff;
}
.dim {
  opacity: 0.25;
}
.doc-title {
  margin: 0;
  padding-top: 13px;
  font-size: 21px;
  font-weight: 300;
  color: #a0c7b0;
}
.window-btns {
  display: flex;
  justify-content: flex-end;
  height: 48px;
  opacity: 0.4;
}
.window-btns button {
  width: 73px;
}
.recorder {
  position: absolute;
  top: 0;
  left: 44%;
  width: 231px;
  height: 25px;
  display: flex;
  align-items: center;
  gap: 11px;
  padding: 0 5px;
  background: #f3f0f3;
  border: 1px solid #777;
}
.rec-light {
  width: 14px;
  height: 14px;
  background: #84f03c;
  border: 1px solid #7a9a68;
}
.rec-state {
  width: 102px;
  height: 20px;
  margin-left: -5px;
  overflow: hidden;
  background: #000;
  border-bottom: 2px solid #555;
  color: #e6e600;
  font-family: "Liberation Serif", serif;
  font-size: 20px;
  font-weight: 400;
  line-height: 22px;
  text-align: center;
}

/* ribbon tabs */
.tabs {
  display: flex;
  height: 42px;
  background: #217346;
  color: #fff;
}
.tab {
  padding: 5px 27px 0;
  margin-right: 1px;
  white-space: nowrap;
}
.file {
  width: 102px;
  padding: 5px 0 0;
  margin-right: 6px;
  text-align: center;
}
.active {
  background: #f1f1f1;
  color: #217346;
}
.tell-me {
  flex: 1;
  display: flex;
  align-items: center;
  gap: 9px;
  padding-left: 21px;
}
.tell-me input {
  flex: 1;
  min-width: 0;
  padding-bottom: 4px;
}
.tell-me input::placeholder {
  color: #90b9a2;
}
.sign-in {
  padding: 5px 15px 0;
}
.share {
  gap: 10px;
  width: 113px;
  padding: 0 21px 4px 0;
  background: #0e5c2f;
}

/* ribbon */
.ribbon {
  display: flex;
  height: 153px;
  padding: 4px 0;
  background: #f1f1f1;
  border-bottom: 1px solid #d2d2d2;
}
.group {
  display: flex;
  flex-direction: column;
  padding: 0 4px;
  border-right: 1px solid #d4d4d4;
}
.group-body {
  flex: 1;
  display: flex;
}
.group-foot {
  display: flex;
  height: 24px;
  margin: 0 -4px;
  line-height: 24px;
  color: #666;
}
.group-foot span {
  flex: 1;
  text-align: center;
}
.launcher {
  width: 28px;
}
.rows {
  display: flex;
  flex-direction: column;
  gap: 16px;
  padding-top: 14px;
}
.row {
  display: flex;
  height: 34px;
}
.tool {
  width: 34px;
  height: 34px;
}
.on {
  background: #c6c6c6;
}
.drop {
  width: 16px;
  height: 34px;
}
.sep {
  width: 1px;
  margin: 6px 4px;
  background: #d9d9d9;
}
.tall {
  margin: 10px 5px 18px;
}
.align-col {
  width: 180px;
}
.big {
  flex-direction: column;
  justify-content: flex-start;
  padding: 8px 2px 0;
  white-space: nowrap;
}
.big svg {
  margin-bottom: 5px;
}
.big span {
  display: flex;
  align-items: center;
  gap: 7px;
}
.big > .caret {
  margin-top: 12px;
}
.wide {
  height: 34px;
  justify-content: flex-start;
  gap: 6px;
  padding: 0 2px 0 6px;
  white-space: nowrap;
}
.wide .caret {
  margin-left: 5px;
}
.clipboard {
  width: 125px;
}
.clipboard .big {
  width: 68px;
}
.mini-col {
  display: flex;
  flex-direction: column;
}
.mini {
  height: 38px;
  padding-left: 4px;
  gap: 11px;
  justify-content: flex-start;
}
.styles {
  width: 277px;
  padding-left: 5px;
}
.cells .big {
  width: 66px;
}
.edit-col {
  width: 142px;
  margin-top: -2px;
}
.edit-col .wide {
  height: 35px;
}
.edit-col .caret {
  margin-left: 0;
}
.edit-col .far {
  margin-left: 5px;
}
.editing {
  width: 328px;
}
.collapse {
  margin-left: auto;
  align-self: flex-end;
  width: 40px;
  height: 24px;
}
.combo {
  position: relative;
  display: block;
  height: 35px;
  background: #fff;
  border: 1px solid #c6c6c6;
}
.combo select, .combo input {
  appearance: none;
  width: 100%;
  height: 100%;
  padding: 0 2px;
}
.combo::after {
  content: "";
  position: absolute;
  right: 5px;
  top: 14px;
  border: 4px solid transparent;
  border-top: 5px solid #666;
  border-bottom: 0;
}
.font-name {
  width: 220px;
}
.font-size {
  width: 58px;
  border-left: 0;
}
.number-format {
  width: 196px;
}
.up {
  align-items: flex-start;
  gap: 0;
  padding-top: 6px;
}
.big-a, .small-a {
  font-weight: 600;
  font-size: 24px;
}
.small-a {
  font-size: 21px;
}
.letter {
  font-size: 23px;
}
.letter b {
  font-weight: 700;
}
.letter .serif-i {
  font-family: "Liberation Serif", serif;
  font-style: italic;
  font-size: 25px;
}
.font-color {
  align-items: flex-start;
  height: 31px;
  border: solid #f00;
  border-width: 0 0 7px;
  width: 28px;
  margin: 0 3px;
  font-size: 24px;
  font-weight: 600;
}
.phonetic {
  color: #4a80ba;
  font-weight: 500;
}
.sign {
  font-size: 25px;
  font-weight: 400;
}
.decimals text {
  font-size: 13px;
  font-weight: 400;
  fill: #444;
}

/* formula bar */
.formula-bar {
  display: flex;
  align-items: center;
  height: 79px;
  padding: 0 8px 1px;
}
.name-box {
  width: 177px;
  height: 45px;
}
.name-box input {
  padding: 4px 6px 0;
  font-family: "Liberation Serif", serif;
  font-size: 27px;
}
.name-box::after {
  right: 10px;
  top: 19px;
}
.grip {
  width: 3px;
  height: 18px;
  margin: 0 25px 0 24px;
  background: repeating-linear-gradient(#aaa 0 3px, transparent 3px 7px);
}
.fx-box, .formula-input {
  display: flex;
  height: 45px;
  background: #fff;
  border: 1px solid #c6c6c6;
}
.fx-box {
  width: 191px;
  margin-right: 5px;
}
.fx-box button {
  flex: 1;
}
.fx {
  color: #555;
  font-family: "Liberation Serif", serif;
  font-style: italic;
  font-weight: 700;
  font-size: 26px;
}
.fx small {
  font-size: 18px;
}
.formula-input {
  flex: 1;
}
.formula-input input {
  flex: 1;
}
.formula-input button {
  width: 30px;
}

/* worksheet */
.sheet {
  flex: 1;
  display: flex;
  min-height: 0;
}
.grid-view {
  position: relative;
  flex: 1;
  overflow: hidden;
  border-right: 1px solid #999;
  border-bottom: 1px solid #999;
  background: linear-gradient(#e6e6e6 48px, #fff 48px);
}
.cells-table {
  table-layout: fixed;
  width: 1916px;
  border-spacing: 0;
}
.cells-table col {
  width: 140px;
}
.cells-table .c-head {
  width: 69px;
}
.cells-table .c-b {
  width: 151px;
}
.cells-table .c-d {
  width: 156px;
}
th, td {
  padding: 0;
  height: 43px;
}
.tall-row th, .tall-row td {
  height: 44px;
}
th {
  font-size: 28px;
  font-weight: 400;
  line-height: 36px;
  color: #000;
  background: linear-gradient(90deg, #e6e6e6, #999) bottom / 100% 1px no-repeat #e6e6e6;
  border-right: 1px solid #999;
}
thead th {
  height: 48px;
  padding-bottom: 11px;
  background: linear-gradient(#e6e6e6, #999) right / 1px 100% no-repeat #e6e6e6;
  border-right: 0;
  border-bottom: 1px solid #999;
}
thead .corner {
  background: linear-gradient(135deg, transparent 50%, #b3b3b3 50%) 25px 5px / 40px 39px no-repeat, linear-gradient(#e6e6e6, #999) right / 1px 100% no-repeat #e6e6e6;
}
td {
  vertical-align: bottom;
  padding: 0 4px;
  white-space: nowrap;
  background: #fff;
  color: #000;
  font-family: "Liberation Serif", "Noto Sans CJK TC", serif;
  font-size: 29px;
  font-weight: 400;
  line-height: 36px;
}
.purple {
  color: #7030a0;
}
.red {
  color: #f00000;
}
.box-tl, .box-l, .box-bl {
  padding-left: 2px;
  border-left: 2px solid #3c66d9;
}
.box-tr, .box-r, .box-br {
  border-right: 2px solid #3c66d9;
}
.box-tl, .box-tr {
  border-top: 2px solid #3c66d9;
}
.box-bl, .box-br {
  border-bottom: 2px solid #3c66d9;
}
.banner {
  position: absolute;
  left: 80px;
  top: 58px;
  width: 1284px;
  height: 112px;
  padding: 8px 19px;
  color: #fff;
  font-family: "Noto Sans CJK TC", sans-serif;
  font-size: 31px;
  line-height: 41px;
  background: linear-gradient(#49c9ea 0, #7ffcff 5px, #4fd3f5 12px, #3dbde3 16px, #2f97b5 90%, #26758c);
  border: 1px solid #2b7f97;
  border-bottom: 2px solid #24596b;
  box-shadow: 0 5px 6px rgba(0, 0, 0, 0.4), inset -8px 0 8px -4px rgba(20, 100, 125, 0.6), inset 5px 0 5px -3px rgba(20, 100, 125, 0.5);
}
.example {
  position: absolute;
  left: 84px;
  top: 198px;
  margin: 0;
  white-space: nowrap;
  color: #000;
  font-family: "Liberation Serif", "Noto Sans CJK TC", serif;
  font-size: 34px;
  font-weight: 400;
  line-height: 44px;
  text-shadow: 2px 4px 4px rgba(0, 0, 0, 0.3);
}
.example-no {
  color: #c0504d;
}
.num {
  font-size: 30px;
}
.vscroll {
  display: flex;
  flex-direction: column;
  width: 34px;
  padding: 1px 3px 0 2px;
}
.vscroll button, .v-thumb {
  background: #fff;
  border: 1px solid #bbb;
}
.vscroll button {
  height: 29px;
}
.v-thumb {
  flex: 329;
  border-color: #999;
}
.v-gutter {
  flex: 221;
  background: #d9d9d9;
}

/* sheet tabs */
.sheet-bar {
  display: flex;
  height: 34px;
  border-bottom: 1px solid #bbb;
}
.sheet-nav {
  display: flex;
  gap: 26px;
  width: 121px;
  padding-left: 30px;
}
.more {
  color: #176b3a;
  font-weight: 700;
  font-size: 23px;
  align-items: flex-start;
}
.sheet-tab {
  height: 30px;
  padding: 0 15px 0 12px;
  border-left: 1px solid #999;
  font-size: 23px;
  line-height: 25px;
  white-space: nowrap;
  font-weight: 400;
}
.cjk {
  font-weight: 300;
}
.current {
  padding: 0 15px;
  background: #fff;
  color: #217346;
  border-left: 0;
  border-bottom: 2px solid #217346;
}
.current + .sheet-tab {
  border-left: 0;
}
.cut {
  width: 30px;
  padding-right: 0;
  margin-right: 7px;
  overflow: hidden;
}
.add-sheet {
  margin-left: 14px;
}
.sheet-bar .grip {
  margin: 9px 18px 0 22px;
}
.hscroll {
  flex: 1;
  display: flex;
  height: 30px;
  margin: 2px 33px 0 0;
}
.hscroll button, .h-thumb {
  background: #fff;
  border: 1px solid #bbb;
}
.hscroll button {
  width: 29px;
}
.h-thumb {
  flex: 606;
  border-color: #999;
}
.h-gutter {
  flex: 56;
  background: #d9d9d9;
}

/* status bar */
.status-bar {
  display: flex;
  align-items: center;
  height: 38px;
  padding: 0 8px;
  background: #f1f1f1;
}
.ready {
  margin-right: 23px;
}
.views {
  display: flex;
  height: 100%;
  margin-left: auto;
}
.views button {
  width: 48px;
}
.zoom-btn {
  width: 26px;
}
.zoom {
  appearance: none;
  width: 175px;
  height: 20px;
  background: linear-gradient(#999, #999) center / 100% 1px no-repeat, linear-gradient(#999, #999) center / 1px 9px no-repeat;
}
.zoom::-webkit-slider-thumb {
  appearance: none;
  width: 7px;
  height: 19px;
  background: #666;
}
.percent {
  margin-left: 14px;
}

/* taskbar */
.taskbar {
  position: relative;
  display: flex;
  height: 70px;
  background: linear-gradient(90deg, #06121a, #0c100c 15%, #090d10 30%, #0a1218 60%, #11181c 85%);
  color: #fff;
}
.wallpaper {
  position: absolute;
  inset: 0;
  width: 100%;
  height: 100%;
}
.task {
  position: relative;
  width: 71px;
  margin-right: 16px;
}
.start {
  margin-left: 6px;
  margin-right: 14px;
}
.open {
  border: solid #a5f2cb;
  border-width: 0 0 4px;
  padding-top: 4px;
}
.task-grip {
  position: relative;
  width: 5px;
  margin: 12px 24px 12px -1px;
  border: solid #444;
  border-width: 0 1px;
}
.tray {
  position: relative;
  display: flex;
  align-items: center;
  margin-left: auto;
  padding-right: 7px;
  border-right: 1px solid #666;
  margin-right: 7px;
  font-weight: 400;
}
.tray-up {
  margin: 0 18px 0 17px;
}
.battery {
  margin-right: 18px;
}
.wifi {
  margin-right: 16px;
}
.sound {
  margin-right: 16px;
}
.ime {
  margin-right: 24px;
}
.clock {
  line-height: 32px;
  text-align: center;
  white-space: nowrap;
}
.notice {
  width: 42px;
  margin: 0 16px 0 32px;
}
```
